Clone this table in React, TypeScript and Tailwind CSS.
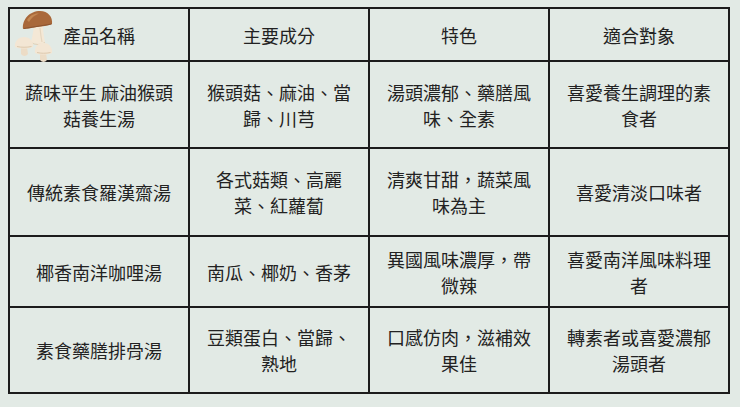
import React from "react";

const rows = [
  ["蔬味平生 麻油猴頭菇養生湯", "猴頭菇、麻油、當歸、川芎", "湯頭濃郁、藥膳風味、全素", "喜愛養生調理的素食者"],
  ["傳統素食羅漢齋湯", "各式菇類、高麗菜、紅蘿蔔", "清爽甘甜，蔬菜風味為主", "喜愛清淡口味者"],
  ["椰香南洋咖哩湯", "南瓜、椰奶、香茅", "異國風味濃厚，帶微辣", "喜愛南洋風味料理者"],
  ["素食藥膳排骨湯", "豆類蛋白、當歸、熟地", "口感仿肉，滋補效果佳", "轉素者或喜愛濃郁湯頭者"],
];

const rowHeights = ["h-[87px]", "h-[88px]", "h-[71px]", "h-[86px]"];

function Mushrooms() {
  return (
    <svg viewBox="0 0 52 54" className="absolute left-0 top-0 w-[52px] h-[54px]">
      {/* big mushroom stem */}
      <path d="M24 18 C23 24 22 29 21 33 C25 35.5 31 35.5 35 33 C34 28 33 23 33 17 Z" fill="#f4e8d6" />
      <path d="M21 33 C25 35.5 31 35.5 35 33 L35 34 C31 36.5 25 36.5 21 34 Z" fill="#e2cfb4" />
      <path d="M30 19 C30.5 24 31 28 32 33" stroke="#e6d6bf" strokeWidth="1.2" fill="none" />
      {/* big mushroom cap */}
      <path d="M13 20 C12 10 20 2 30 2 C38 2 43 8 42 15 C38 17 32 17 27 18 C21 19 16 20 13 20 Z" fill="#a9683a" />
      <path d="M17 11 C20 6 25 4 29 4.5 C25 6 21 9 19 13 Z" fill="#c38752" />
      <path d="M14 19.5 C20 18.5 30 17 41.5 15" stroke="#8c5430" strokeWidth="1" fill="none" />
      {/* left small mushroom */}
      <path d="M11 38 L11 45 C13 47.5 16 47.5 18 45 L17 38 Z" fill="#ecdcc6" />
      <path d="M5 38 C4 32 9 28 14 28 C20 28 24 33 23 38 C19 40 9 40 5 38 Z" fill="#f3e6d4" />
      <path d="M7 37.5 C11 38.5 17 38.5 21.5 37.5" stroke="#ddc9ae" strokeWidth="1" fill="none" />
      {/* right small mushroom */}
      <path d="M30 44 L30 51 C32 53.5 35 53.5 37 51 L36 44 Z" fill="#ecdcc6" />
      <path d="M25 44 C24 38 29 33 34 34 C39 34 43 39 42 44 C38 46 29 46 25 44 Z" fill="#f3e6d4" />
      <path d="M27 43.5 C31 44.5 36 44.5 40.5 43.5" stroke="#ddc9ae" strokeWidth="1" fill="none" />
    </svg>
  );
}

export default function App() {
  const cell =
    "border-2 border-[#1c1c1c] text-center align-middle px-3 text-[18px] leading-[26px] text-[#222]";
  return (
    <div
      className="w-[740px] h-[407px] bg-[#e2eae5] pt-[7px] pl-[8px]"
      style={{ fontFamily: '"Noto Sans CJK TC", "Noto Sans", sans-serif' }}
    >
      <table className="table-fixed border-collapse w-[722px]">
        <thead>
          <tr className="h-[53px]">
            <th className={`${cell} font-normal relative`}>
              <Mushrooms />
              產品名稱
            </th>
            <th className={`${cell} font-normal`}>主要成分</th>
            <th className={`${cell} font-normal`}>特色</th>
            <th className={`${cell} font-normal`}>適合對象</th>
          </tr>
        </thead>
        <tbody>
          {rows.map((row, i) => (
            <tr key={i} className={rowHeights[i]}>
              {row.map((text, j) => (
                <td key={j} className={cell}>
                  {text}
                </td>
              ))}
            </tr>
          ))}
        </tbody>
      </table>
    </div>
  );
}
